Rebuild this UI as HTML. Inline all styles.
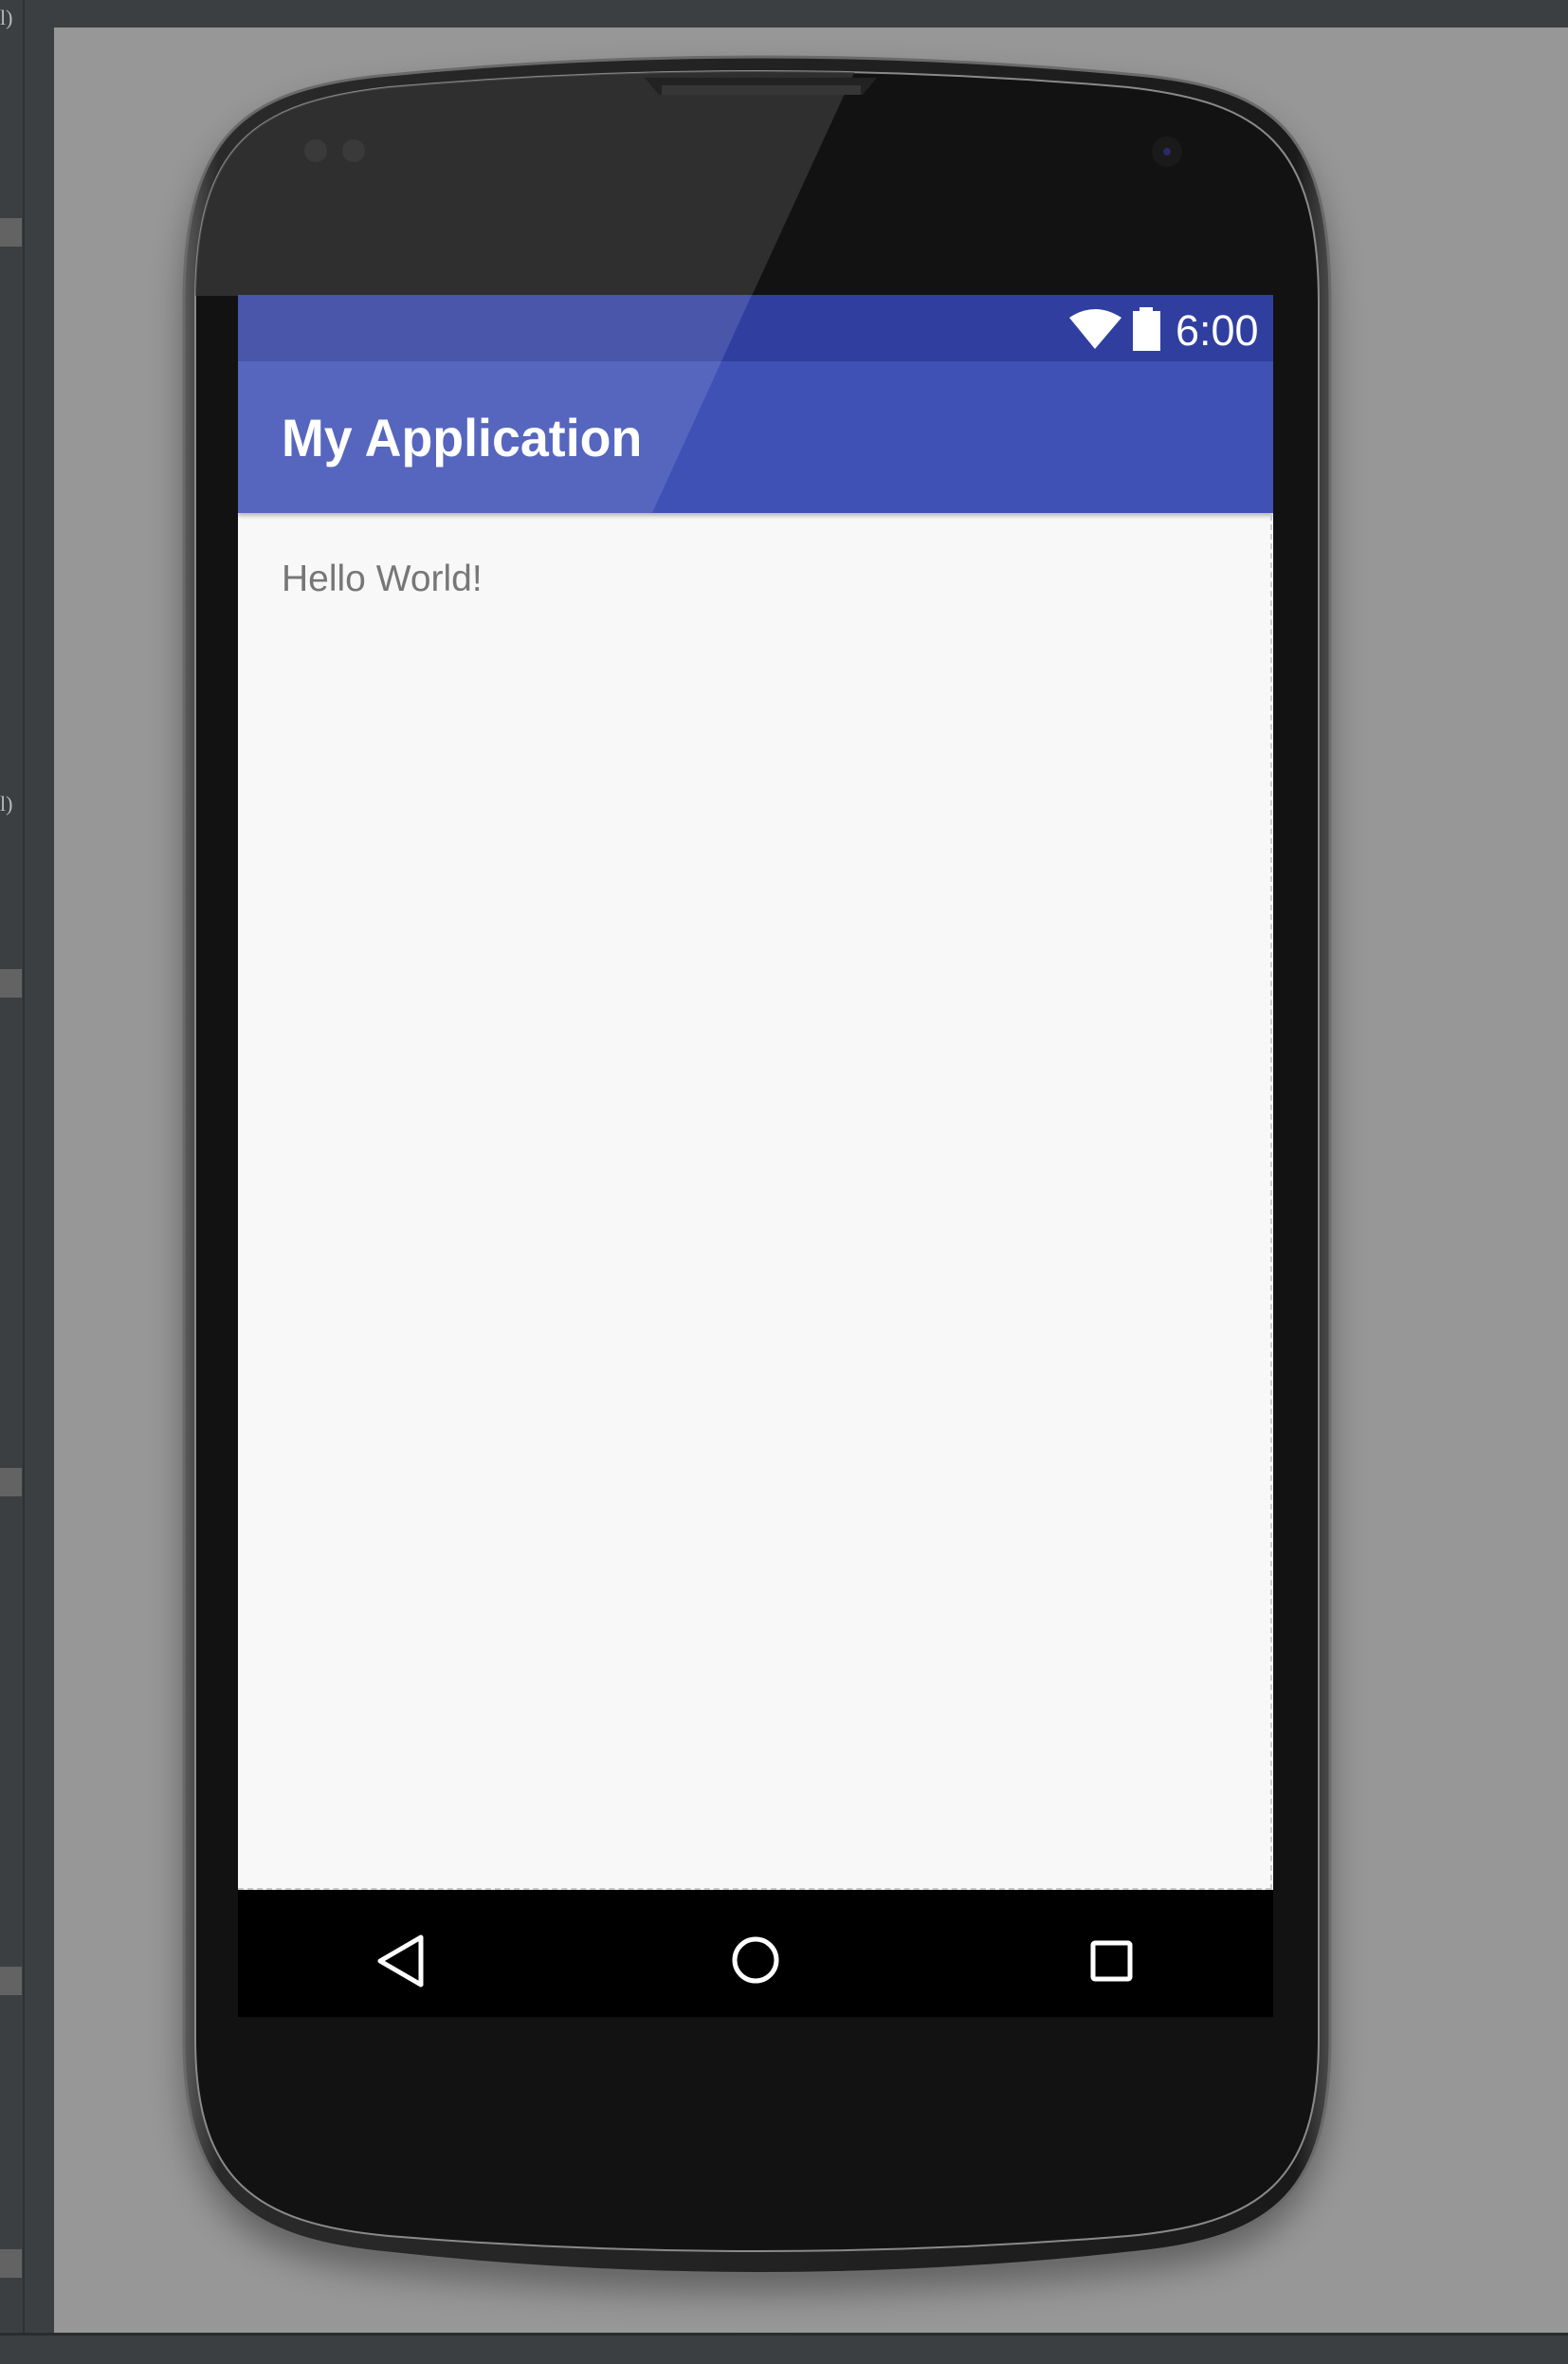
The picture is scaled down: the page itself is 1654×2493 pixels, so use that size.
<!DOCTYPE html>
<html><head><meta charset="utf-8"><style>
html,body{margin:0;padding:0}
body{width:1654px;height:2490px;position:relative;overflow:hidden;background:#979797;font-family:"Liberation Sans",sans-serif}
.abs{position:absolute}
</style></head><body>
<div class="abs" style="left:0;top:0;width:1654px;height:29px;background:#3b3f42"></div>
<div class="abs" style="left:0;top:0;width:57px;height:2490px;background:#3b3f42"></div>
<div class="abs" style="left:24px;top:0;width:2px;height:2460px;background:#2e3133"></div>
<div class="abs" style="left:0;top:230px;width:23px;height:30px;background:#636363"></div>
<div class="abs" style="left:0;top:1022px;width:23px;height:30px;background:#636363"></div>
<div class="abs" style="left:0;top:1548px;width:23px;height:30px;background:#636363"></div>
<div class="abs" style="left:0;top:2074px;width:23px;height:30px;background:#636363"></div>
<div class="abs" style="left:0;top:2372px;width:23px;height:30px;background:#636363"></div>
<div class="abs" style="left:0;top:6px;font-size:22px;color:#bbb;font-family:'Liberation Serif',serif">l)</div>
<div class="abs" style="left:0;top:835px;font-size:22px;color:#bbb;font-family:'Liberation Serif',serif">l)</div>
<div class="abs" style="left:0;top:2460px;width:1654px;height:30px;background:#3b3f42;border-top:3px solid #2a2c2e"></div>

<svg class="abs" style="left:0;top:0" width="1654" height="2490" viewBox="0 0 1654 2490">
<defs>
<linearGradient id="rim" x1="0" x2="1" y1="0" y2="0">
<stop offset="0" stop-color="#5a5a5a"/><stop offset="0.03" stop-color="#2a2a2a"/><stop offset="0.97" stop-color="#1a1a1a"/><stop offset="1" stop-color="#4a4a4a"/></linearGradient>
<filter id="sh"><feGaussianBlur stdDeviation="18"/></filter>
<clipPath id="pc"><path d="M206,320 C206,150 270,108 410,92 Q800,58 1190,92 C1330,108 1391,150 1391,320 L1391,2150 C1391,2300 1330,2345 1190,2358 Q800,2390 410,2358 C270,2345 206,2300 206,2150 Z"/></clipPath>
</defs>
<path d="M194,320 C194,140 260,95 400,80 Q800,40 1210,80 C1345,95 1403,140 1403,320 L1403,2150 C1403,2310 1345,2360 1200,2375 Q800,2420 400,2375 C260,2360 194,2310 194,2150 Z" fill="#000" opacity="0.35" filter="url(#sh)" transform="translate(0,20)"/>
<path d="M194,320 C194,140 260,95 400,80 Q800,40 1210,80 C1345,95 1403,140 1403,320 L1403,2150 C1403,2310 1345,2360 1200,2375 Q800,2420 400,2375 C260,2360 194,2310 194,2150 Z" fill="url(#rim)" stroke="#6a6a6a" stroke-width="3"/>
<path d="M206,320 C206,150 270,108 410,92 Q800,58 1190,92 C1330,108 1391,150 1391,320 L1391,2150 C1391,2300 1330,2345 1190,2358 Q800,2390 410,2358 C270,2345 206,2300 206,2150 Z" fill="#121212" stroke="#8a8a8a" stroke-width="2"/>
<g clip-path="url(#pc)">
<polygon points="150,40 918,40 793,312 150,312" fill="#3a3a3a" opacity="0.75"/>
<polygon points="680,82 925,82 910,100 695,100" fill="#222"/>
<rect x="698" y="90" width="210" height="10" fill="#444" opacity="0.6"/>
</g>
<circle cx="333" cy="159" r="12" fill="#3a3a3a"/>
<circle cx="373" cy="159" r="12" fill="#3a3a3a"/>
<circle cx="1231" cy="160" r="16" fill="#1a1a1a"/>
<circle cx="1231" cy="160" r="4" fill="#2a2a66"/>
</svg>

<!-- screen -->
<div class="abs" style="left:251px;top:311px;width:1092px;height:1816px;overflow:hidden;background:#f8f8f8">
  <div class="abs" style="left:0;top:0;width:1092px;height:70px;background:#303f9f"></div>
  <div class="abs" style="left:0;top:70px;width:1092px;height:160px;background:#3f51b5;box-shadow:0 3px 4px rgba(0,0,0,0.25)"></div>
  <svg class="abs" style="left:0;top:0" width="1092" height="230"><polygon points="0,0 542,0 437,230 0,230" fill="#fff" opacity="0.12"/></svg>
  <svg class="abs" style="left:876px;top:12px" width="60" height="50" viewBox="0 0 60 50"><path d="M1,12 Q28,-6 56,12 L28,45 Z" fill="#fff"/></svg>
  <svg class="abs" style="left:943px;top:10px" width="32" height="50" viewBox="0 0 32 50"><path d="M8,3 H22 V7 H30 V49 H1 V7 H8 Z" fill="#fff"/></svg>
  <div class="abs" style="left:989px;top:13px;font-size:45px;color:#fff;line-height:50px">6:00</div>
  <div class="abs" style="left:46px;top:120px;font-size:56px;font-weight:bold;color:#fff;line-height:62px;transform:scaleX(0.96);transform-origin:left">My Application</div>
  <div class="abs" style="left:46px;top:277px;font-size:39px;color:#777;line-height:46px">Hello World!</div>
  <div class="abs" style="left:0;top:1680px;width:1090px;height:0;border-top:2px dashed #c8c8c8"></div>
  <div class="abs" style="left:1089px;top:232px;width:0;height:1450px;border-left:2px dashed #ccc"></div>
  <div class="abs" style="left:0;top:1682px;width:1092px;height:134px;background:#000"></div>
  <svg class="abs" style="left:0;top:1682px" width="1092" height="134">
    <path d="M193,50 L193,100 L150,75 Z" fill="none" stroke="#fff" stroke-width="5" stroke-linejoin="round"/>
    <circle cx="546" cy="74" r="22" fill="none" stroke="#fff" stroke-width="5"/>
    <rect x="902" y="56" width="39" height="38" rx="2" fill="none" stroke="#fff" stroke-width="5"/>
  </svg>
</div>
</body></html>
